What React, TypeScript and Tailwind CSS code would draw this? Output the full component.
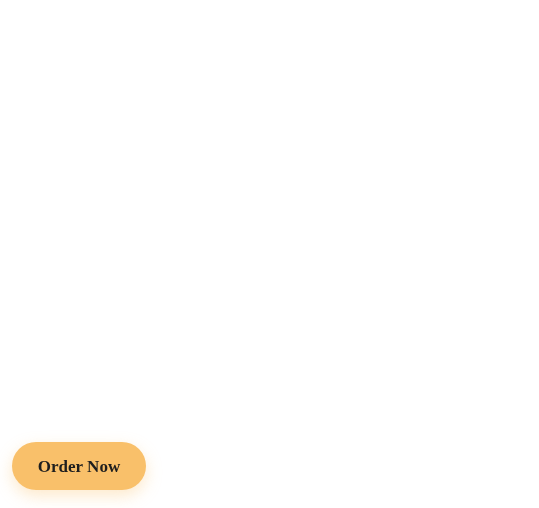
import React from 'react';

export default function App() {
  return (
    <div className="min-h-screen bg-white">
      <button
        className="fixed bottom-[18px] left-3 h-12 w-[134px] rounded-full bg-[#f9c06a] pt-0.5 text-[17px] font-bold text-[#1e1e1e] shadow-[0_6px_16px_rgba(249,192,106,0.35)]"
        style={{ fontFamily: '"Liberation Serif", "DejaVu Serif", serif' }}
      >
        Order Now
      </button>
    </div>
  );
}
